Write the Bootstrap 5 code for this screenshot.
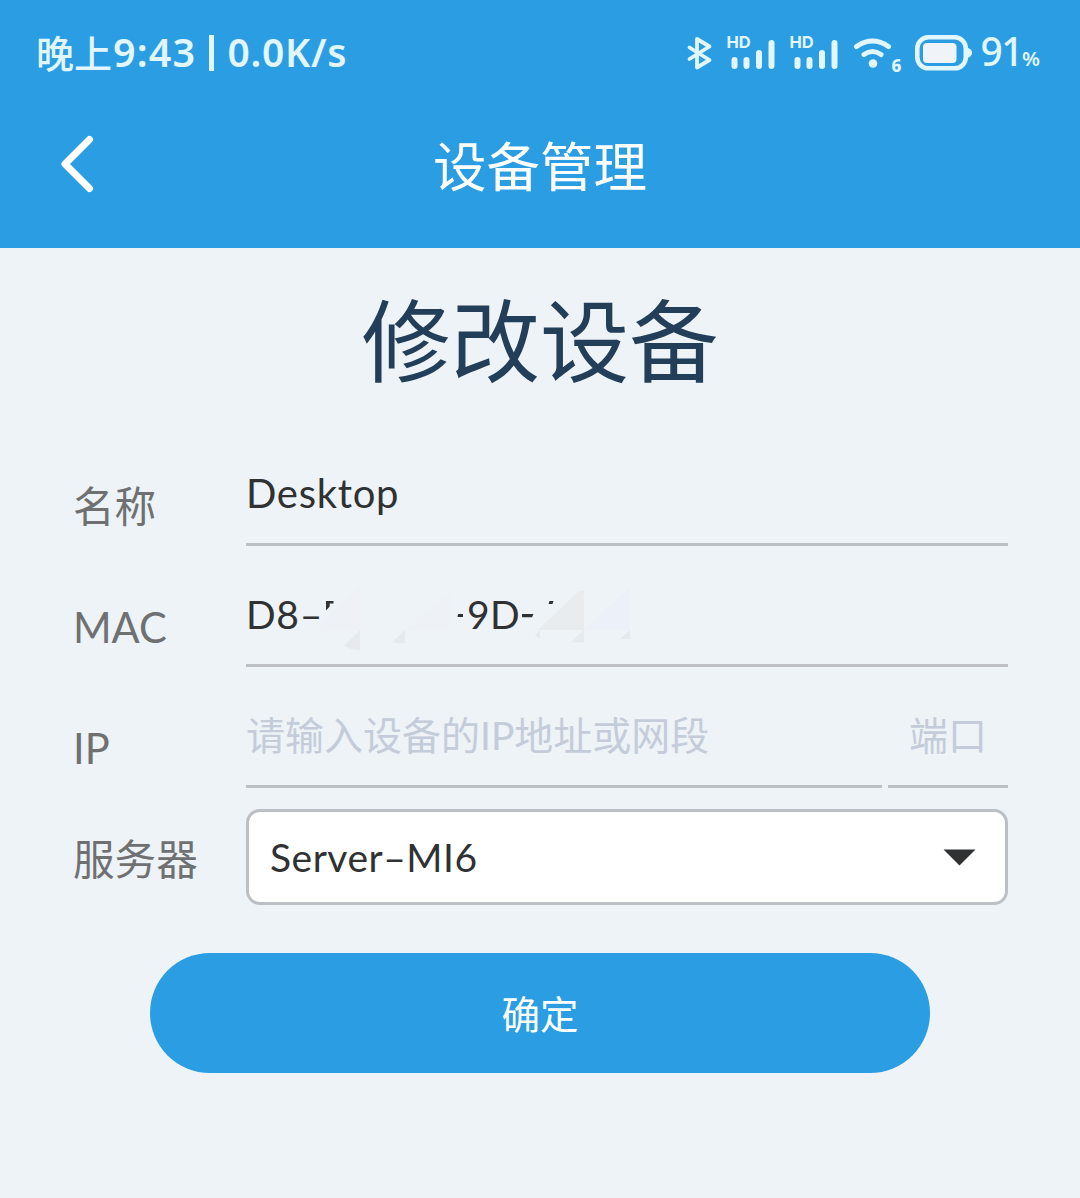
<!DOCTYPE html>
<html lang="zh-CN">
<head>
<meta charset="utf-8">
<meta name="viewport" content="width=device-width, initial-scale=1">
<title>设备管理</title>
<link href="https://cdn.jsdelivr.net/npm/bootstrap@5.3.0/dist/css/bootstrap.min.css" rel="stylesheet">
<style>
body{background:#edf3f7;font-family:Lato,"Noto Sans CJK SC",sans-serif;color:#303133;min-height:1198px;overflow:hidden}
.top-area{background:#2a9de3;height:248px}
.status-line{height:106px;padding:0 40px 0 36px;color:#e2f6ff;font-family:"Noto Sans","Noto Sans CJK SC",sans-serif;font-weight:500}
.clock-text{font-size:38px;line-height:60px}
.clock-digits{font-size:39.5px;font-weight:600;letter-spacing:1.1px;margin:-2px 0 0 1px}
.clock-bar{width:4.500px;height:36px;background:#e2f6ff;margin:0 14px 0 13px}
.rate-text{font-size:39px;font-weight:600;letter-spacing:.7px;margin-top:-2px}
.level-text{font-size:39px;line-height:60px;margin:2px 0 0 8px;letter-spacing:-1.5px}
.level-unit{font-size:20.5px;font-weight:600;letter-spacing:0}
.title-line{height:120px;padding-left:56px}
.title-line svg{margin-top:-4px}
.title-text{font-size:53.5px;line-height:80px;color:#fff;margin-left:-97px}
.page-heading{font-size:89.3px;line-height:120px;color:#233e59;height:177px;padding-top:33px}
.form-area{padding:0 72px 0 73px}
.field-line{height:121px}
.field-label{width:173px;font-size:41.6px;line-height:60px;color:#6f7072}
.field-label.low{padding-top:51px}
.line-input{border:0;border-bottom:3px solid #bcc0c5;border-radius:0;background:transparent;padding:18px 0 0;height:121px;font-size:39px;line-height:60px;color:#303133}
.line-input:focus{background:transparent;box-shadow:none}
.line-input::placeholder{color:#c4ccd9;opacity:1}
#dev{font-size:40px;letter-spacing:.7px}
.mac-a{width:221px;letter-spacing:.7px}
.mac-b{letter-spacing:.5px}
.port-input{width:120px;text-align:center}
.server-box{height:96px;border:3px solid #bcc0c5;border-radius:14px;background:#fff;font-size:39px;padding:0 29px 0 21px}
.srv{letter-spacing:.5px}
.ok-btn{width:780px;height:120px;margin-left:-1px;border-radius:60px;background:#2a9de3;color:#fff;font-size:38.5px;border:0;padding-top:10px}
.ok-btn:hover{background:#2a9de3;color:#fff}
.mosaic{left:0;top:0}
</style>
</head>
<body>
<header class="top-area">
  <div class="status-line d-flex align-items-center justify-content-between">
    <div class="clock-text text-nowrap d-flex align-items-center"><span>晚上</span><span class="clock-digits">9:43</span><i class="clock-bar"></i><span class="rate-text">0.0K/s</span></div>
    <div class="d-flex align-items-center">
      <svg width="286" height="50" viewBox="687 28 286 50" fill="none" stroke="#e2f6ff" stroke-linecap="round" stroke-linejoin="round">
        <path d="M690.500 47.500 710.500 60 698 67.500V39L710.500 46.500 690.500 59" stroke-width="3.800"/>
        <g stroke-width="6"><path d="M735.500 60v6M747.500 60v6M760 53v13M772.500 43v23M798.500 60v6M810.500 60v6M823 53v13M835.500 43v23"/></g>
        <g fill="#e2f6ff" stroke="none" font-family="Inter" font-weight="700" font-size="16.500"><text x="727.500" y="48">HD</text><text x="790.500" y="48">HD</text></g>
        <path d="M857.500 46.500Q873.500 35.500 889.500 46.500M865 54.500Q873.500 48.500 882 54.500" stroke-width="5"/>
        <circle cx="874" cy="63.500" r="4.300" fill="#e2f6ff" stroke="none"/>
        <text x="892.500" y="72" font-family="Noto Sans" font-weight="800" font-size="17" fill="#e2f6ff" stroke="none">6</text>
        <rect x="918.300" y="37.300" width="48.500" height="31" rx="11" stroke-width="4.600"/>
        <rect x="924" y="43" width="33.500" height="20" rx="4" fill="#f0f3f7" stroke="none"/>
        <path d="M968 47.500q5 1.500 5 5.300t-5 5.300z" fill="#e2f6ff" stroke="none"/>
      </svg>
      <div class="level-text text-nowrap">91<span class="level-unit">%</span></div>
    </div>
  </div>
  <div class="title-line d-flex align-items-center">
    <svg width="41" height="64" viewBox="56 132 41 64" fill="none" stroke="#fff" stroke-width="7" stroke-linecap="round" stroke-linejoin="round"><path d="M89.500 139.500 65 164 89.500 188.500"/></svg>
    <div class="title-text flex-grow-1 text-center">设备管理</div>
  </div>
</header>
<main>
  <h1 class="page-heading text-center fw-normal m-0">修改设备</h1>
  <form class="form-area">
    <div class="field-line d-flex"><label class="field-label low flex-shrink-0" for="dev">名称</label><input id="dev" class="form-control line-input" value="Desktop"></div>
    <div class="field-line d-flex"><label class="field-label low flex-shrink-0">MAC</label>
      <div class="line-input flex-grow-1 position-relative d-flex align-items-center"><span class="mac-a">D8–</span><span class="mac-b">9D</span>
        <svg class="mosaic position-absolute" width="460" height="118" viewBox="246 546 460 118">
          <path d="M326 601h7.500v2.500h-3.800v3l-3.700 4z" fill="#303133"/>
          <path d="M458 614h5v3h-5.500zM522 614h11.500l-1.500 3.200h-10zM549.500 601h4l-1 3h-4z" fill="#303133"/>
          <path d="M360 585v45h-38v-7z" fill="#eef1f6"/><path d="M450 593v37h-45z" fill="#eef2f6"/>
          <path d="M360 630v20q-9 0-16-4zM405 630v13q-6 1-13-1z" fill="#e6e9ee"/>
          <path d="M584 591v39h-46l41-39z" fill="#e8ecef"/><path d="M630 587v43h-46z" fill="#ecf0f8"/>
          <path d="M540 630v9l-5-4zM584 630v12q-7 1-13 0zM630 630v9h-10z" fill="#e6eaef"/>
        </svg>
      </div></div>
    <div class="field-line d-flex"><label class="field-label low flex-shrink-0" for="ip">IP</label><div class="d-flex flex-grow-1" style="gap:6px"><input id="ip" class="form-control line-input" placeholder="请输入设备的IP地址或网段"><input class="form-control line-input port-input flex-shrink-0" placeholder="端口"></div></div>
    <div class="d-flex align-items-center" style="margin-top:21px"><label class="field-label flex-shrink-0 pt-1">服务器</label>
      <div class="server-box flex-grow-1 d-flex align-items-center justify-content-between"><span class="srv">Server–MI6</span><svg width="33" height="17" viewBox="0 0 33 17"><path d="M.5.500h32L16.500 16.500z" fill="#303133"/></svg></div></div>
    <div class="text-center" style="margin-top:48px"><button type="button" class="btn ok-btn">确定</button></div>
  </form>
</main>
<script src="https://cdn.jsdelivr.net/npm/bootstrap@5.3.0/dist/js/bootstrap.bundle.min.js"></script>
</body>
</html>
